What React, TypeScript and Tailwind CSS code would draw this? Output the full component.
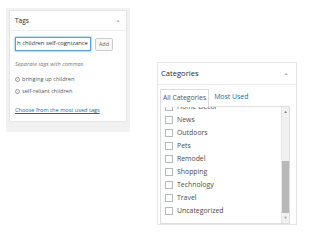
import { X } from "lucide-react";

const categories = [
  "Home Decor",
  "News",
  "Outdoors",
  "Pets",
  "Remodel",
  "Shopping",
  "Technology",
  "Travel",
  "Uncategorized",
];

const tags = ["bringing up children", "self-reliant children"];

function TagsBox() {
  return (
    <div className="ml-[6px] mt-[8px] w-[124px] h-[124px] bg-[#f1f1f1] pt-[2px] px-[3px]">
      <div className="w-[118px] h-[112px] border border-[#e5e5e5] bg-white flex flex-col">
        <div className="h-[20px] flex items-center justify-between pl-[5px] pr-[6px] border-b border-[#eee]">
          <span className="text-[6.5px] text-[#23282d]">Tags</span>
          <span className="text-[4px] text-[#aaa]">▲</span>
        </div>

        <div className="px-[5px] pt-[6px]">
          <div className="flex items-center gap-[4px]">
            <div className="w-[76px] h-[14px] border border-[#5b9dd9] shadow-[0_0_2px_rgba(30,140,190,0.8)] flex items-center px-[1px] overflow-hidden whitespace-nowrap">
              <span className="text-[5.9px] text-[#333] leading-none">h children self-cognizance</span>
              <span className="w-px h-[9px] bg-[#333] ml-px" />
            </div>
            <div className="w-[18px] h-[13px] border border-[#ccc] bg-[#f7f7f7] rounded-[2px] flex items-center justify-center text-[5.5px] text-[#666]">
              Add
            </div>
          </div>

          <p className="mt-[9px] leading-[9px] text-[5.6px] italic text-[#777]">
            Separate tags with commas
          </p>

          <ul className="mt-[4px]">
            {tags.map((tag) => (
              <li key={tag} className="h-[12px] flex items-center gap-[2px] text-[5.6px] text-[#555]">
                <span className="w-[5px] h-[5px] rounded-full border border-[#999] flex items-center justify-center">
                  <X className="w-[3px] h-[3px] text-[#bbb]" strokeWidth={3} />
                </span>
                {tag}
              </li>
            ))}
          </ul>

          <p className="mt-[8px] leading-[10px] text-[5.6px] text-[#0073aa] underline">
            Choose from the most used tags
          </p>
        </div>
      </div>
    </div>
  );
}

function CategoriesBox() {
  return (
    <div className="mt-[62px] ml-[27px] w-[140px] h-[163px] border border-[#e5e5e5] bg-white flex flex-col">
      <div className="h-[22px] shrink-0 flex items-center justify-between pl-[3px] pr-[8px] border-b border-[#eee]">
        <span className="text-[7.6px] text-[#23282d]">Categories</span>
        <span className="text-[4px] text-[#aaa]">▲</span>
      </div>

      <div className="pl-[2px] pr-[6px] pt-[3px]">
        {/* Tabs */}
        <div className="flex items-end">
          <div className="relative z-10 h-[18px] -mb-px px-[2px] whitespace-nowrap border border-b-0 border-[#ddd] bg-white flex items-center text-[6.8px] text-[#555]">
            All Categories
          </div>
          <div className="h-[18px] pl-[5px] whitespace-nowrap flex items-center text-[6.9px] text-[#0073aa]">
            Most Used
          </div>
        </div>

        {/* Checklist, scrolled down a little */}
        <div className="h-[118px] border border-[#ddd] flex">
          <div className="flex-1 overflow-hidden">
            <ul className="-mt-[6.5px] pl-[4px]">
              {categories.map((c) => (
                <li key={c} className="h-[13px] flex items-center gap-[4px] text-[6.9px] text-[#4a4a4a]">
                  <span className="w-[8px] h-[8px] border border-[#b4b9be] bg-white shrink-0" />
                  {c}
                </li>
              ))}
            </ul>
          </div>

          {/* Scrollbar */}
          <div className="w-[8px] bg-[#f1f1f1] border-l border-[#e6e6e6] flex flex-col">
            <div className="h-[10px] flex items-center justify-center text-[4px] text-[#777]">▲</div>
            <div className="flex-1">
              <div className="mt-[44px] h-[52px] bg-[#b8b8b8]" />
            </div>
            <div className="h-[10px] flex items-center justify-center text-[4px] text-[#999]">▼</div>
          </div>
        </div>
      </div>
    </div>
  );
}

export default function App() {
  return (
    <div className="w-[320px] h-[240px] bg-white flex items-start overflow-hidden font-['Open_Sans',sans-serif]">
      <TagsBox />
      <CategoriesBox />
    </div>
  );
}
